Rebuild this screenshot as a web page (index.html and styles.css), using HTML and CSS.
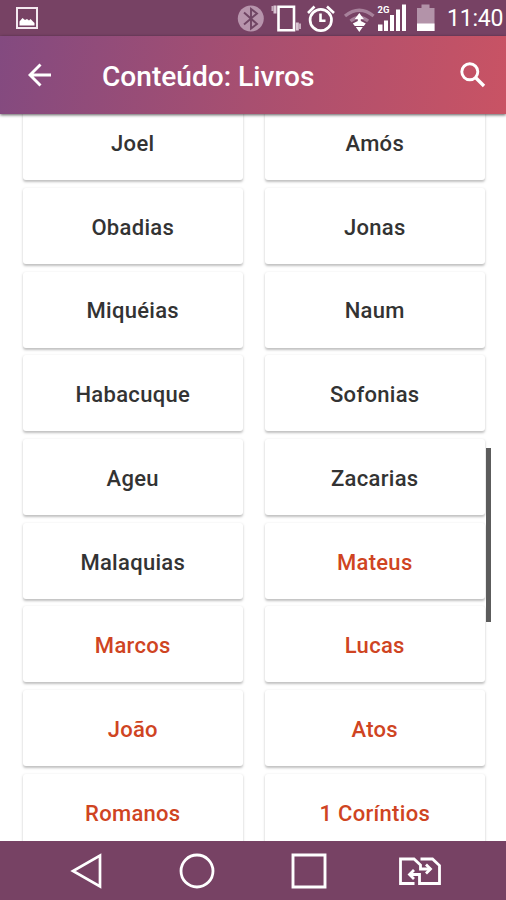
FILE: index.html
```html
<!DOCTYPE html>
<html lang="pt">
<head>
<meta charset="utf-8">
<title>Conteúdo: Livros</title>
<link rel="stylesheet" href="styles.css">
</head>
<body>
<div class="screen">
  <div class="status">
    <svg class="photo" width="22" height="22" viewBox="0 0 22 22"><path fill="none" stroke="#f4e9f0" stroke-width="2" d="M1 1h20v20H1z"/><path fill="#fff" d="M3.500 18.500v-4l3-3.500 2.500 2 2-1 2 1.500 1.500-1.500 4 4v2.500z"/></svg>
    <div class="indicators">
      <svg width="147" height="36" viewBox="230 0 147 36">
        <circle cx="250.800" cy="18.500" r="13" fill="#b794ac"/>
        <path d="M244 12.500l13 11.500-6 4.500V9l6 4.500-13 11" fill="none" stroke="#704564" stroke-width="1.900"/>
        <path d="M278.500 6.800h15.500v23.500h-15.500z" fill="none" stroke="#fff" stroke-width="2.600"/>
        <path d="M275 5.500v8M297.300 22.500v8" fill="none" stroke="#dac6d3" stroke-width="3"/>
        <path d="M272.500 6v5M300 23.500v5.500" fill="none" stroke="#c6abbd" stroke-width="2"/>
        <circle cx="320.800" cy="20" r="10.700" fill="none" stroke="#fff" stroke-width="2.700"/>
        <path d="M320.500 13.500v7.200h5M308 13l6.500-6.500m12.500 0 7 6.500" fill="none" stroke="#fff" stroke-width="2.600"/>
        <path d="M345 16q14.300-11.500 28.600 0M350.500 21q8.800-7 17.600 0" fill="none" stroke="#a7819b" stroke-width="3.300"/>
        <path d="M359.300 13l4.500 6h-3v2l5 2.500-2 2.500h-9l-2-2.500 5-2.500v-2h-3zM355.800 27h7l-3.500 5z" fill="#fff"/>
      </svg>
      <svg width="60" height="36" viewBox="377 0 60 36">
        <path fill="#fff" d="M378 24.500h4.500V31H378zM384 20.500h4V31h-4zM390 15h4v16h-4zM396 9.500h4V31h-4zM402 4.500h4V31h-4z"/>
        <text x="377.500" y="13" class="net">2G</text>
        <path fill="#b393a9" d="M421.500 4.500h8V8h5v23H417V8h4.500z"/><path fill="#fff" d="M417 23.500h17.500V31H417z"/>
      </svg>
      <span class="clock">11:40</span>
    </div>
  </div>
  <header class="bar">
    <svg class="back" width="24" height="24" viewBox="0 0 24 24"><path d="M23 12H2M12.500 1.500 2 12l10.500 10.500" fill="none" stroke="#fff" stroke-width="2.900"/></svg>
    <h1>Conteúdo: Livros</h1>
    <svg class="search" width="26" height="26" viewBox="0 0 26 26"><circle cx="9.800" cy="9.800" r="8" fill="none" stroke="#fff" stroke-width="2.900"/><path d="M15.500 15.500l8.500 8.500" stroke="#fff" stroke-width="3.400"/></svg>
  </header>
  <main class="list">
    <div class="grid">
      <div class="card">Joel</div><div class="card">Amós</div>
      <div class="card">Obadias</div><div class="card">Jonas</div>
      <div class="card">Miquéias</div><div class="card">Naum</div>
      <div class="card">Habacuque</div><div class="card">Sofonias</div>
      <div class="card">Ageu</div><div class="card">Zacarias</div>
      <div class="card">Malaquias</div><div class="card new">Mateus</div>
      <div class="card new">Marcos</div><div class="card new">Lucas</div>
      <div class="card new">João</div><div class="card new">Atos</div>
      <div class="card new">Romanos</div><div class="card new">1 Coríntios</div>
    </div>
    <div class="thumb"></div>
  </main>
  <nav class="nav">
    <svg width="32" height="36" viewBox="0 0 32 36"><path d="M30 2.500v31L3 18z" fill="none" stroke="#fff" stroke-width="2.700"/></svg>
    <svg width="36" height="36" viewBox="0 0 36 36"><circle cx="18" cy="18" r="16" fill="none" stroke="#fff" stroke-width="2.800"/></svg>
    <svg width="36" height="36" viewBox="0 0 36 36"><path d="M2 2h32v32H2z" fill="none" stroke="#fff" stroke-width="2.900"/></svg>
    <svg width="42" height="36" viewBox="0 0 42 36"><g fill="none" stroke="#fff" stroke-width="2.800"><path d="M15.500 30.500H1.500V6H15l6.500 6v4h10M21.500 6h12l7 6.500v18H20.500v-9H10.500"/><path d="M27 11.500l4.500 4.500-4.500 4.500M15 17l-4.500 4.500L15 26"/></g></svg>
  </nav>
</div>
</body>
</html>
```
FILE: styles.css
```css
body {
  margin: 0;
  background: #fff;
  font-family: Roboto, "Liberation Sans", sans-serif;
}

.screen {
  display: flex;
  flex-direction: column;
  width: 506px;
  height: 900px;
  overflow: hidden;
}

.status {
  display: flex;
  justify-content: space-between;
  flex: none;
  height: 36px;
  background: #774264;
}

.photo {
  margin: 7px 0 0 16px;
}

.indicators {
  display: flex;
}

.clock {
  width: 59px;
  margin-left: 10px;
  color: #fff;
  font-size: 23px;
  line-height: 38px;
  letter-spacing: -0.2px;
  white-space: nowrap;
}

.net {
  fill: #fff;
  font-size: 9.5px;
  font-weight: 700;
}

.bar {
  position: relative;
  z-index: 1;
  display: flex;
  align-items: center;
  flex: none;
  height: 78px;
  background: linear-gradient(100deg, #834a80, #a84f70 50%, #c95364);
  box-shadow: 0 1px 3px rgba(0, 0, 0, 0.65);
}

.back {
  margin-left: 28px;
}

.bar h1 {
  flex: 1;
  margin: 2px 0 0 50px;
  color: #fff;
  font-size: 28.1px;
  font-weight: 500;
}

.search {
  margin-right: 20px;
}

.list {
  position: relative;
  flex: 1;
  min-height: 0;
  overflow: hidden;
}

.grid {
  display: grid;
  grid-template-columns: 219.5px 219.5px;
  grid-auto-rows: 76px;
  gap: 7.7px 22.5px;
  margin: -9.7px 0 0 23px;
}

.card {
  display: flex;
  align-items: center;
  justify-content: center;
  padding-top: 2.6px;
  box-sizing: border-box;
  border-radius: 3px;
  background: #fff;
  box-shadow: 0 1.5px 2.5px rgba(0, 0, 0, 0.25);
  color: #333;
  font-size: 22px;
  font-weight: 480;
  letter-spacing: 0.3px;
}

.new {
  color: #cf4422;
}

.thumb {
  position: absolute;
  top: 334px;
  left: 486px;
  width: 5px;
  height: 174px;
  background: #5c5c5c;
}

.nav {
  display: flex;
  align-items: center;
  flex: none;
  gap: 76px;
  height: 59px;
  padding: 0 0 0 70px;
  background: #774264;
}

.nav svg:nth-child(2) {
  margin-left: 1px;
}

.nav svg:nth-child(4) {
  margin-left: -4px;
}
```
